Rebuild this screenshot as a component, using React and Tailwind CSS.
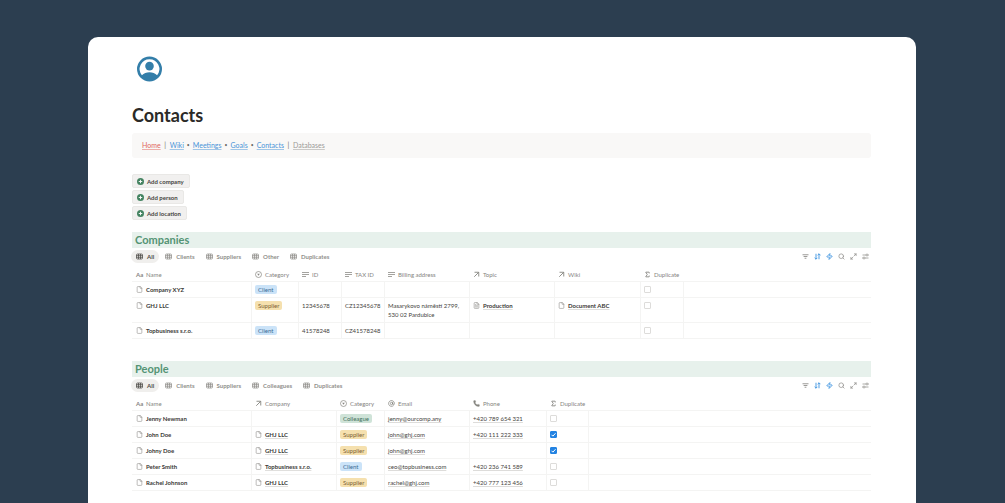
import React, { useState } from 'react';
import { AtSign, File, FileText, Maximize2, Phone, Search, Sigma, Zap } from 'lucide-react';

const tagColors = {
  Client: 'bg-[#cbe3f8] text-[#3a6a94]',
  Supplier: 'bg-[#f5e0ae] text-[#7b6233]',
  Colleague: 'bg-[#cfe3d8] text-[#43705a]',
};

const navLinks = [
  { label: 'Home', color: 'text-[#e0665c]', after: '|' },
  { label: 'Wiki', color: 'text-[#4a94d8]', after: '•' },
  { label: 'Meetings', color: 'text-[#4a94d8]', after: '•' },
  { label: 'Goals', color: 'text-[#4a94d8]', after: '•' },
  { label: 'Contacts', color: 'text-[#4a94d8]', after: '|' },
  { label: 'Databases', color: 'text-[#9b9a97]' },
];

const companyColumns = [
  { label: 'Name', icon: 'title', width: 'w-[120px]' },
  { label: 'Category', icon: 'select', width: 'w-[47px]' },
  { label: 'ID', icon: 'text', width: 'w-[43px]' },
  { label: 'TAX ID', icon: 'text', width: 'w-[43px]' },
  { label: 'Billing address', icon: 'text', width: 'w-[85px]' },
  { label: 'Topic', icon: 'relation', width: 'w-[85px]' },
  { label: 'Wiki', icon: 'relation', width: 'w-[86px]' },
  { label: 'Duplicate', icon: 'formula', width: 'w-[43px]' },
];

const companies = [
  { name: 'Company XYZ', category: 'Client' },
  {
    name: 'GHJ LLC',
    category: 'Supplier',
    id: '12345678',
    taxId: 'CZ12345678',
    address: ['Masarykovo náměstí 2799,', '530 02 Pardubice'],
    topic: 'Production',
    wiki: 'Document ABC',
  },
  { name: 'Topbusiness s.r.o.', category: 'Client', id: '41578248', taxId: 'CZ41578248' },
];

const peopleColumns = [
  { label: 'Name', icon: 'title', width: 'w-[120px]' },
  { label: 'Company', icon: 'relation', width: 'w-[85px]' },
  { label: 'Category', icon: 'select', width: 'w-[48px]' },
  { label: 'Email', icon: 'email', width: 'w-[85px]' },
  { label: 'Phone', icon: 'phone', width: 'w-[77px]' },
  { label: 'Duplicate', icon: 'formula', width: 'w-[42px]' },
];

const people = [
  { name: 'Jenny Newman', category: 'Colleague', email: 'jenny@ourcomp.any', phone: '+420 789 654 321' },
  { name: 'John Doe', company: 'GHJ LLC', category: 'Supplier', email: 'john@ghj.com', phone: '+420 111 222 333', duplicate: true },
  { name: 'Johny Doe', company: 'GHJ LLC', category: 'Supplier', email: 'john@ghj.com', duplicate: true },
  { name: 'Peter Smith', company: 'Topbusiness s.r.o.', category: 'Client', email: 'ceo@topbusiness.com', phone: '+420 236 741 589' },
  { name: 'Rachel Johnson', company: 'GHJ LLC', category: 'Supplier', email: 'rachel@ghj.com', phone: '+420 777 123 456' },
];

function Glyph({ children, strokeWidth = 1.5 }) {
  return (
    <svg className="w-[7px] h-[7px] shrink-0" viewBox="0 0 14 14" fill="none" stroke="currentColor" strokeWidth={strokeWidth}>
      {children}
    </svg>
  );
}

function TableIcon() {
  return (
    <Glyph>
      <rect x="1" y="2" width="12" height="10" rx="2" />
      <path d="M1 5.3h12M1 8.6h12M5 2v10M9 2v10" />
    </Glyph>
  );
}

function FilterIcon() {
  return (
    <Glyph strokeWidth={1.8}>
      <path d="M1 3.5h12M3.2 7h7.6M5.2 10.5h3.6" />
    </Glyph>
  );
}

function SortIcon() {
  return (
    <Glyph strokeWidth={1.8}>
      <path d="M4 1.5v11M1.2 9.6L4 12.4l2.8-2.8M10 12.5v-11M7.2 4.4L10 1.6l2.8 2.8" />
    </Glyph>
  );
}

function SettingsIcon() {
  return (
    <Glyph>
      <path d="M1 4h7M12 4h1.5M.5 10H2M6 10h7" />
      <circle cx="10" cy="4" r="2" />
      <circle cx="4" cy="10" r="2" />
    </Glyph>
  );
}

function ColumnIcon({ type }) {
  const cls = 'w-[7px] h-[7px] shrink-0';
  if (type === 'title') return <span className="w-[7px] font-bold">Aa</span>;
  if (type === 'select') {
    return (
      <Glyph strokeWidth={1.4}>
        <circle cx="7" cy="7" r="6" />
        <path d="M4.4 5.6h5.2L7 9.6z" fill="currentColor" stroke="none" />
      </Glyph>
    );
  }
  if (type === 'text') {
    return (
      <Glyph>
        <path d="M0 3h14M0 7h14M0 11h8" />
      </Glyph>
    );
  }
  if (type === 'relation') {
    return (
      <Glyph strokeWidth={1.8}>
        <path d="M3 2.5h8.5V11M11.5 2.5L2.5 11.5" />
      </Glyph>
    );
  }
  if (type === 'email') return <AtSign className={cls} strokeWidth={2.5} />;
  if (type === 'phone') return <Phone className={cls} fill="currentColor" strokeWidth={1} />;
  return <Sigma className={cls} strokeWidth={3} />;
}

function ViewBar({ views, name }) {
  const [active, setActive] = useState('All');
  const iconButton = 'flex w-[7px] h-[7px] items-center justify-center';

  return (
    <div className="-ml-px mt-0.5 flex h-[13px] items-center justify-between text-[#91908c]">
      <div className="flex gap-px" role="tablist" aria-label={name}>
        {views.map((view) => (
          <button
            key={view}
            role="tab"
            aria-selected={active === view}
            onClick={() => setActive(view)}
            className={`flex h-[13px] items-center gap-1 rounded-full px-[5px] text-[6px] font-bold ${
              active === view ? 'bg-[#f0efed] text-[#4b4a46]' : ''
            }`}
          >
            <TableIcon />
            {view}
          </button>
        ))}
      </div>
      <div className="flex items-center gap-[5px] pr-0.5">
        <button className={iconButton} aria-label="Filter"><FilterIcon /></button>
        <button className={`${iconButton} text-[#3d93e0]`} aria-label="Sort"><SortIcon /></button>
        <button className={`${iconButton} text-[#3d93e0]`} aria-label="Automations">
          <Zap className="w-[7px] h-[7px]" strokeWidth={3} />
        </button>
        <button className={iconButton} aria-label="Search"><Search className="w-[7px] h-[7px]" strokeWidth={2.5} /></button>
        <button className={iconButton} aria-label="Expand"><Maximize2 className="w-[7px] h-[7px]" strokeWidth={2.5} /></button>
        <button className={iconButton} aria-label="Settings"><SettingsIcon /></button>
      </div>
    </div>
  );
}

function Section({ title, views, children }) {
  return (
    <section>
      <h2 className="h-4 bg-[#e7f1ec] pl-[3px] text-[11px] leading-4 font-bold text-[#549474]">{title}</h2>
      <ViewBar views={views} name={title} />
      {children}
    </section>
  );
}

function DataTable({ columns, children }) {
  return (
    <table className="mt-[5px] w-full table-fixed border-separate border-spacing-0 text-[6px] leading-[9px] text-[#454440]">
      <thead>
        <tr>
          {columns.map((column) => (
            <th
              key={column.label}
              className={`${column.width} h-[14px] border-b border-[#f4f4f3] p-0 pl-[3px] first:pl-1 text-left align-middle font-normal whitespace-nowrap text-[#85847f]`}
            >
              <span className="flex items-center gap-[3px]">
                <ColumnIcon type={column.icon} />
                {column.label}
              </span>
            </th>
          ))}
          <th className="border-b border-[#f4f4f3] p-0"></th>
        </tr>
      </thead>
      <tbody>{children}</tbody>
    </table>
  );
}

function Cell({ children }) {
  return (
    <td className="border-r border-b border-[#f4f4f3] py-[3px] pr-0 pl-[3px] first:pl-1 align-top whitespace-nowrap">
      {children}
    </td>
  );
}

function LastCell() {
  return <td className="border-b border-[#f4f4f3] p-0"></td>;
}

function PageLink({ children, icon: Icon = File, underline }) {
  if (!children) return null;
  return (
    <a href="#" className="flex items-center gap-[3px] font-bold text-[#3b3a37]">
      <Icon className="w-[7px] h-[9px] shrink-0 text-[#8d8c88]" />
      <span className={underline ? 'underline decoration-[#e0dfdd] underline-offset-1' : ''}>{children}</span>
    </a>
  );
}

function Tag({ children }) {
  return <span className={`block w-fit rounded-[2px] px-[3px] ${tagColors[children]}`}>{children}</span>;
}

function ContactLink({ href, children }) {
  if (!children) return null;
  return <a href={href} className="underline decoration-[#dddcda] underline-offset-1">{children}</a>;
}

function Checkbox({ checked = false, label }) {
  const [value, setValue] = useState(checked);
  return (
    <label className="relative mt-px block h-[7px] w-[7px]">
      <input
        type="checkbox"
        aria-label={label}
        checked={value}
        onChange={() => setValue(!value)}
        className="peer block h-[7px] w-[7px] appearance-none rounded-[1px] border border-[#dddcda] checked:border-[#2383e2] checked:bg-[#2383e2]"
      />
      <svg className="pointer-events-none absolute inset-0 hidden peer-checked:block" viewBox="0 0 14 14" fill="none" stroke="white" strokeWidth="2">
        <path d="M3 7.5l2.8 2.8L11 4.5" />
      </svg>
    </label>
  );
}

function App() {
  return (
    <div className="flex min-h-screen flex-col bg-[#2c3e50] pt-[37px] pr-[89px] pl-[88px] font-['Lato',sans-serif]">
      <main className="flex-1 rounded-t-[10px] bg-white pt-[19px] pr-[45px] pl-[44px]">
        {/* Page icon */}
        <svg className="ml-[5px] h-[26px] w-[25px] text-[#337ea9]" viewBox="0 0 25 25" fill="currentColor">
          <path
            fillRule="evenodd"
            d="M12.5 0a12.5 12.5 0 100 25 12.5 12.5 0 000-25zm0 2.7a9.8 9.8 0 017.6 16c-1.9-2-4.6-3-7.6-3s-5.7 1-7.6 3a9.8 9.8 0 017.6-16z"
          />
          <circle cx="12.5" cy="9.6" r="4.3" />
        </svg>

        <h1 className="mt-[21px] text-[18px] leading-6 font-bold text-[#2b2a27]">Contacts</h1>

        <nav className="mt-1.5 flex h-[25px] items-center rounded-[3px] bg-[#f9f8f7] pl-2.5 text-[7px] text-[#6b6a66]">
          {navLinks.map((link) => (
            <React.Fragment key={link.label}>
              <a href="#" className={`underline decoration-current/50 underline-offset-1 ${link.color}`}>{link.label}</a>
              {link.after && (
                <span className={`w-[9px] text-center ${link.after === '•' ? 'text-[5px]' : ''}`}>{link.after}</span>
              )}
            </React.Fragment>
          ))}
        </nav>

        {/* Quick actions */}
        <div className="mt-4 flex flex-col items-start gap-0.5">
          {['Add company', 'Add person', 'Add location'].map((label) => (
            <button
              key={label}
              className="flex h-[14px] items-center gap-[3px] rounded-[2px] border border-[#e9e8e6] bg-[#f1f0ef] pr-[5px] pl-1 text-[6px] font-bold text-[#454440]"
            >
              <svg className="h-[7px] w-[7px]" viewBox="0 0 14 14">
                <circle cx="7" cy="7" r="7" fill="#448361" />
                <path d="M7 3.5v7M3.5 7h7" stroke="white" strokeWidth="1.8" />
              </svg>
              {label}
            </button>
          ))}
        </div>

        <div className="mt-3 flex flex-col gap-[22px] pb-3">
          <Section title="Companies" views={['All', 'Clients', 'Suppliers', 'Other', 'Duplicates']}>
            <DataTable columns={companyColumns}>
              {companies.map((row) => (
                <tr key={row.name}>
                  <Cell><PageLink>{row.name}</PageLink></Cell>
                  <Cell><Tag>{row.category}</Tag></Cell>
                  <Cell>{row.id}</Cell>
                  <Cell>{row.taxId}</Cell>
                  <Cell>{row.address?.map((line) => <div key={line}>{line}</div>)}</Cell>
                  <Cell><PageLink icon={FileText} underline>{row.topic}</PageLink></Cell>
                  <Cell><PageLink underline>{row.wiki}</PageLink></Cell>
                  <Cell><Checkbox label={`${row.name} duplicate`} /></Cell>
                  <LastCell />
                </tr>
              ))}
            </DataTable>
          </Section>

          <Section title="People" views={['All', 'Clients', 'Suppliers', 'Colleagues', 'Duplicates']}>
            <DataTable columns={peopleColumns}>
              {people.map((row) => (
                <tr key={row.name}>
                  <Cell><PageLink>{row.name}</PageLink></Cell>
                  <Cell><PageLink underline>{row.company}</PageLink></Cell>
                  <Cell><Tag>{row.category}</Tag></Cell>
                  <Cell><ContactLink href={`mailto:${row.email}`}>{row.email}</ContactLink></Cell>
                  <Cell><ContactLink href={`tel:${row.phone}`}>{row.phone}</ContactLink></Cell>
                  <Cell><Checkbox checked={row.duplicate} label={`${row.name} duplicate`} /></Cell>
                  <LastCell />
                </tr>
              ))}
            </DataTable>
          </Section>
        </div>
      </main>
    </div>
  );
}

export default App;
